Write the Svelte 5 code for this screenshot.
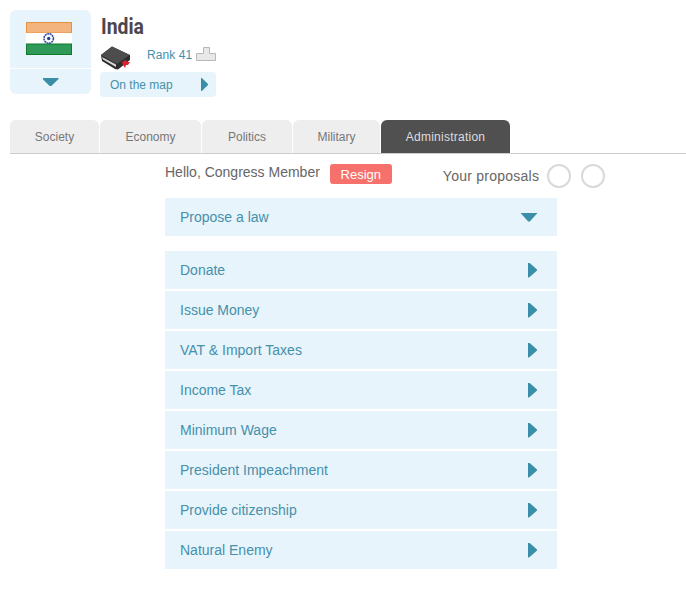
<script>
  const tabs = [
    { name: 'Society', width: 89 },
    { name: 'Economy', width: 101 },
    { name: 'Politics', width: 90 },
    { name: 'Military', width: 87 },
    { name: 'Administration', width: 129, active: true }
  ];

  const actions = [
    'Donate',
    'Issue Money',
    'VAT & Import Taxes',
    'Income Tax',
    'Minimum Wage',
    'President Impeachment',
    'Provide citizenship',
    'Natural Enemy'
  ];
</script>

<div class="page">
  <header class="country">
    <div class="flag-box">
      <div class="flag-area">
        <svg class="flag" width="46" height="33" viewBox="0 0 46 33">
          <rect x="0.5" y="0.5" width="45" height="10.5" fill="#f4b47e" stroke="#e3933f" />
          <rect x="0" y="11" width="46" height="11" fill="#fff" />
          <rect x="0.5" y="22" width="45" height="10.5" fill="#2f9a58" stroke="#0d7a2c" />
          <circle cx="22.7" cy="16.5" r="4.7" fill="none" stroke="#3350a8" stroke-width="1.6" stroke-dasharray="2 0.5" />
          <circle cx="22.7" cy="16.5" r="1.7" fill="#27408b" />
        </svg>
      </div>
      <div class="flag-toggle"><span class="arrow-down small"></span></div>
    </div>

    <div class="info">
      <h1><span>India</span></h1>
      <div class="rank-line">
        <svg class="book" width="32" height="24" viewBox="0 0 32 24">
          <path d="M1 9 L12 0.5 L30 9 L30 14 L18 23.5 L15 23 L2 15 Z" fill="#2e2e2e" />
          <path d="M2 11 L16 18.5 L16 21 L3 13.5 Z" fill="#d8d8d8" />
          <path d="M1 9 L12 0.5 L29.5 9 L17 18 Z" fill="#4d4d4d" />
          <path d="M22 16 L26 14 L27 16 L30 16 L28 19 L26 19 L25 22 L23 19 Z" fill="#e02030" />
        </svg>
        <span class="rank">Rank 41</span>
        <svg class="podium" width="20" height="14" viewBox="0 0 20 14">
          <path d="M7.5 0.5 H13.5 V6.5 H19.5 V13.5 H0.5 V6.5 H7.5 Z" fill="#e8e8e8" stroke="#b8b8b8" />
        </svg>
      </div>
      <div class="map-link">
        <span>On the map</span>
        <span class="arrow-right small"></span>
      </div>
    </div>
  </header>

  <nav class="tabs">
    {#each tabs as tab}
      <div class="tab" class:active={tab.active} style="width: {tab.width}px">{tab.name}</div>
    {/each}
  </nav>

  <main class="content">
    <div class="greeting">
      <span class="hello">Hello, Congress Member</span>
      <span class="resign">Resign</span>
      <div class="proposals">
        <span class="proposals-label">Your proposals</span>
        <span class="slot"></span>
        <span class="slot second"></span>
      </div>
    </div>

    <div class="row propose">
      <span>Propose a law</span>
      <span class="arrow-down"></span>
    </div>

    <div class="list">
      {#each actions as action}
        <div class="row">
          <span>{action}</span>
          <span class="arrow-right"></span>
        </div>
      {/each}
    </div>
  </main>
</div>

<style>
  :global(body) {
    background: #fff;
    font-family: "Liberation Sans", Arial, sans-serif;
  }

  .page {
    width: 686px;
    height: 597px;
    overflow: hidden;
    box-sizing: border-box;
    padding: 10px 0 0 10px;
  }

  .country {
    display: flex;
    height: 110px;
  }

  .flag-box {
    width: 81px;
    height: 84px;
    background: #e8f4fb;
    border-radius: 6px;
    overflow: hidden;
    margin-right: 9px;
  }

  .flag-area {
    height: 58px;
    border-bottom: 1px solid #fff;
    padding-left: 16px;
  }

  .flag {
    display: block;
    padding-top: 12px;
  }

  .flag-toggle {
    display: flex;
    justify-content: center;
    padding-top: 9px;
  }

  .info {
    width: 116px;
  }

  h1 {
    margin: 0 0 0 1px;
    font-family: Roboto, sans-serif;
    font-size: 22px;
    line-height: 34px;
    height: 35px;
    font-weight: 700;
    color: #4b4550;
  }

  h1 span {
    display: inline-block;
    transform: scaleX(0.88);
    transform-origin: left center;
  }

  .rank-line {
    display: flex;
    align-items: flex-start;
    height: 27px;
  }

  .book {
    flex: none;
    margin: 1px 15px 0 0;
  }

  .rank {
    flex: none;
    margin: 3px 4px 0 0;
    font-size: 12px;
    line-height: 14px;
    letter-spacing: 0.1px;
    white-space: nowrap;
    color: #4590ab;
  }

  .podium {
    flex: none;
    margin-top: 2px;
  }

  .map-link {
    display: flex;
    align-items: center;
    justify-content: space-between;
    height: 25px;
    padding: 0 8px 0 10px;
    background: #e8f4fb;
    border-radius: 4px;
    font-size: 12px;
    color: #4590ab;
  }

  .tabs {
    display: flex;
    gap: 1px;
    height: 33px;
    border-bottom: 1px solid #ccc;
  }

  .tab {
    display: flex;
    align-items: center;
    justify-content: center;
    background: #eee;
    border-radius: 6px 6px 0 0;
    font-size: 12px;
    color: #777;
  }

  .tab.active {
    background: #505050;
    color: #ddd;
    letter-spacing: 0.25px;
  }

  .content {
    width: 392px;
    margin-left: 155px;
  }

  .greeting {
    display: flex;
    align-items: flex-start;
    height: 44px;
    width: 450px;
    font-size: 14px;
    color: #666;
  }

  .hello {
    margin-top: 10px;
  }

  .resign {
    margin: 10px 0 0 10px;
    width: 62px;
    height: 20px;
    line-height: 21px;
    text-align: center;
    background: #f6716b;
    border-radius: 3px;
    font-size: 13px;
    color: #fff;
  }

  .proposals {
    display: flex;
    align-items: center;
    gap: 8px;
    margin: 10px 0 0 51px;
  }

  .proposals-label {
    letter-spacing: 0.25px;
  }

  .slot {
    width: 20px;
    height: 20px;
    border: 2px solid #d9d9d9;
    border-radius: 50%;
  }

  .slot.second {
    margin-left: 2px;
  }

  .row {
    display: flex;
    align-items: center;
    justify-content: space-between;
    height: 38px;
    padding: 0 20px 0 15px;
    background: #e8f4fb;
    font-size: 14px;
    color: #4590ab;
  }

  .row.propose {
    margin-bottom: 15px;
  }

  .list {
    display: flex;
    flex-direction: column;
    gap: 2px;
  }

  .arrow-right {
    width: 9px;
    height: 15px;
    background: #3b8ea8;
    clip-path: polygon(0 0, 12% 0, 100% 46%, 100% 54%, 12% 100%, 0 100%);
  }

  .arrow-right.small {
    width: 7px;
    height: 13px;
  }

  .arrow-down {
    width: 16px;
    height: 9px;
    background: #3b8ea8;
    clip-path: polygon(0 0, 100% 0, 100% 12%, 55% 100%, 45% 100%, 0 12%);
  }

  .arrow-down.small {
    width: 16px;
    height: 8px;
  }
</style>
